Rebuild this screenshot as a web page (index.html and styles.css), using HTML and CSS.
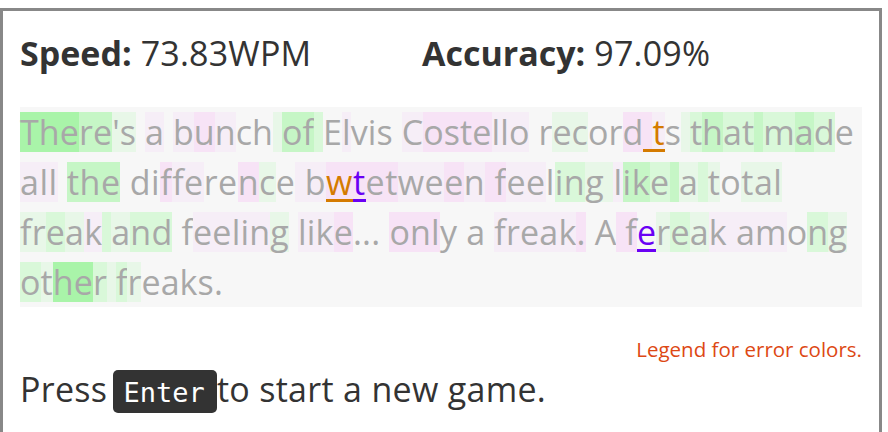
FILE: index.html
```html
<!DOCTYPE html>
<html>
<head>
<meta charset="utf-8">
<link rel="stylesheet" href="styles.css">
</head>
<body>
<div class="box">
  <div class="stats">
    <div><b>Speed:</b> 73.83WPM</div>
    <div><b>Accuracy:</b> 97.09%</div>
  </div>
  <div class="text">
    <div class="ln"><span class="g4">The</span><span class="g3">re</span><span class="g1">'s</span> <span class="p1">a</span> <span class="p1">b</span><span class="p2">u</span><span class="p1">n</span>ch<span class="g1"> </span><span class="g3">of</span><span class="g2"> </span>E<span class="p1">l</span>vis <span class="p1">C</span><span class="p2">oste</span><span class="p1">llo</span> r<span class="g1">ec</span>or<span class="p2">d<span class="eo"> </span></span><span class="p1"><span class="eo">t</span></span>s<span class="g1"> </span><span class="g2">t</span><span class="g3">h</span><span class="g2">at</span><span class="g3"> </span><span class="g2">m</span><span class="g3">a</span><span class="g2">d</span>e</div>
    <div class="ln loose"><span class="p1">all</span> <span class="g3">the</span> di<span class="p2">f</span><span class="p1">fe</span>re<span class="p2">n</span><span class="g1">c</span>e<span class="p1"> b</span><span class="p2"><span class="eo">w</span><span class="ep">t</span>et</span><span class="p1">we</span><span class="p2">e</span><span class="p1">n</span><span class="p2"> f</span><span class="p1">ee</span>l<span class="g2">in</span><span class="g1">g </span><span class="p1">l</span><span class="g3">ik</span><span class="g2">e</span><span class="g3"> </span><span class="g1">a</span><span class="g2"> </span><span class="g1">t</span>o<span class="g1">tal</span></div>
    <div class="ln mid"><span class="g1">fr</span><span class="g2">e</span><span class="g1">a</span><span class="p1">k</span><span class="g2"> </span><span class="g1">a</span><span class="g2">nd</span> f<span class="p1">eelin</span><span class="g1">g</span> <span class="p1">lik</span><span class="p2">e</span>... <span class="p2">onl</span>y a <span class="p1">freak</span><span class="p2">.</span> A<span class="p2"> f</span><span class="ep">e</span><span class="g1">r</span><span class="g2">e</span><span class="g1">a</span><span class="p1">k am</span>o<span class="g2">n</span><span class="g1">g</span></div>
    <div class="ln"><span class="g2">o</span><span class="g1">t</span><span class="g4">he</span><span class="g2">r</span><span class="g1"> </span><span class="g2">f</span><span class="g1">r</span>eaks.</div>
  </div>
  <div class="legend">Legend for error colors.</div>
  <div class="press">Press <kbd class="key">Enter</kbd> to start a new game.</div>
</div>
</body>
</html>
```
FILE: styles.css
```css
body {
  margin: 8px 0 0 0;
  background: #ffffff;
}

.box {
  width: 882px;
  box-sizing: border-box;
  border: 3px solid #888888;
  padding: 22px 17px 20px 17px;
  font-family: "Open Sans", "Noto Sans", sans-serif;
  color: #333333;
}

.stats {
  display: grid;
  grid-template-columns: 402px auto;
  font-size: 34px;
  line-height: 40px;
  letter-spacing: 0.2px;
}

.stats b {
  font-weight: 700;
  letter-spacing: 0;
}

.text {
  margin-top: 34px;
  background: #f7f7f7;
  font-size: 34px;
  line-height: 50px;
  color: #a8a8a8;
}

.ln {
  height: 50px;
  white-space: pre;
  letter-spacing: 0.1px;
}

.ln.loose {
  letter-spacing: 0.5px;
}

.ln.mid {
  letter-spacing: 0.2px;
}

.g4, .g3, .g2, .g1, .p1, .p2, .p3 {
  background-repeat: no-repeat;
  background-position: 0 50%;
  background-size: 100% 40px;
}

.g4 { background-image: linear-gradient(#a9f4a9, #a9f4a9); }
.g3 { background-image: linear-gradient(#c6f6c6, #c6f6c6); }
.g2 { background-image: linear-gradient(#d9f8d9, #d9f8d9); }
.g1 { background-image: linear-gradient(#e8f7e8, #e8f7e8); }
.p1 { background-image: linear-gradient(#f6eef7, #f6eef7); }
.p2 { background-image: linear-gradient(#f7e3f6, #f7e3f6); }
.p3 { background-image: linear-gradient(#f7dcf5, #f7dcf5); }

.eo {
  color: #d47b00;
  background: linear-gradient(#d47b00, #d47b00) 0 calc(50% + 18.5px) / 100% 3px no-repeat;
}

.ep {
  color: #6a00f4;
  background: linear-gradient(#6a00f4, #6a00f4) 0 calc(50% + 18.5px) / 100% 3px no-repeat;
}

.legend {
  margin-top: 30px;
  text-align: right;
  font-size: 20.5px;
  line-height: 24px;
  color: #dd4814;
}

.press {
  margin-top: 6px;
  font-size: 34px;
  line-height: 44px;
  letter-spacing: 0.3px;
  color: #333333;
}

.key {
  display: inline-block;
  font-family: "DejaVu Sans Mono", "Liberation Mono", monospace;
  font-size: 27px;
  line-height: 27px;
  letter-spacing: 0;
  padding: 9px 12px 7px 10px;
  margin: 0 -9px 0 -3px;
  background: #333333;
  color: #ffffff;
  border-radius: 5px;
}
```
